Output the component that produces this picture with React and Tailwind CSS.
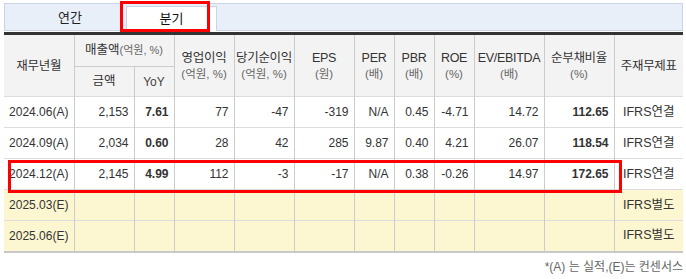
const rows = [
  { d: '2024.06(A)', s: '2,153', y: '7.61', op: '77', ni: '-47', eps: '-319', per: 'N/A', pbr: '0.45', roe: '-4.71', ev: '14.72', debt: '112.65', t: 'IFRS연결' },
  { d: '2024.09(A)', s: '2,034', y: '0.60', op: '28', ni: '42', eps: '285', per: '9.87', pbr: '0.40', roe: '4.21', ev: '26.07', debt: '118.54', t: 'IFRS연결' },
  { d: '2024.12(A)', s: '2,145', y: '4.99', op: '112', ni: '-3', eps: '-17', per: 'N/A', pbr: '0.38', roe: '-0.26', ev: '14.97', debt: '172.65', t: 'IFRS연결' },
  { d: '2025.03(E)', est: true, t: 'IFRS별도' },
  { d: '2025.06(E)', est: true, t: 'IFRS별도' },
];

const widths = [70, 60, 40, 60, 60, 60, 40, 40, 40, 70, 70, 69];

function Head({ title, unit, last }) {
  return (
    <th rowSpan={2} className={`${last ? '' : 'border-r border-[#cccccc]'} whitespace-nowrap font-normal text-[12.5px] leading-[16px] tracking-[-0.3px] text-[#333]`}>
      <div>{title}</div>
      {unit && <div className="text-[11.5px] tracking-normal text-[#666]">{unit}</div>}
    </th>
  );
}

export default function App() {
  const num = 'border-r border-[#cccccc] text-right pr-[5px]';
  return (
    <div className="relative h-[279px] w-[686px] bg-white pl-[4px] pr-[3px] pt-[3px] text-[#333]" style={{ fontFamily: '"Liberation Sans", "Noto Sans CJK KR", sans-serif' }}>
      <div className="flex h-[28px] items-end border border-[#c9d3e5] bg-[#e8eff9]">
        <div className="ml-[19px] flex h-[24px] w-[92px] items-center justify-center text-[13px] text-[#222]">연간</div>
        <div className="mb-[-1px] ml-[10px] flex h-[25px] w-[91px] items-center justify-center border-x border-t border-[#c9d3e5] bg-white text-[13px] text-[#111]">분기</div>
      </div>

      <table className="mt-[1px] w-[679px] table-fixed border-collapse border-t-[3px] border-b-2 border-t-[#333] border-b-[#c8c8c8] text-[12px]">
        <colgroup>
          {widths.map((w, i) => <col key={i} style={{ width: w }} />)}
        </colgroup>
        <thead className="bg-[#f3f3f3]">
          <tr className="h-[33px]">
            <Head title="재무년월" />
            <th colSpan={2} className="whitespace-nowrap border-r border-b border-[#cccccc] font-normal text-[12.5px] text-[#333]">
              매출액<span className="text-[11px] text-[#666]">(억원, %)</span>
            </th>
            <Head title="영업이익" unit="(억원, %)" />
            <Head title="당기순이익" unit="(억원, %)" />
            <Head title="EPS" unit="(원)" />
            <Head title="PER" unit="(배)" />
            <Head title="PBR" unit="(배)" />
            <Head title="ROE" unit="(%)" />
            <Head title="EV/EBITDA" unit="(배)" />
            <Head title="순부채비율" unit="(%)" />
            <Head title="주재무제표" last />
          </tr>
          <tr className="h-[30px]">
            <th className="border-r border-[#cccccc] font-normal text-[12.5px] text-[#333]">금액</th>
            <th className="border-r border-[#cccccc] font-normal text-[12px] text-[#444]">YoY</th>
          </tr>
        </thead>
        <tbody>
          {rows.map((r) => (
            <tr key={r.d} className={`h-[31px] border-t border-[#dddddd] ${r.est ? 'bg-[#fdf7d1]' : 'bg-white'}`}>
              <td className="border-r border-[#cccccc] text-center">{r.d}</td>
              <td className={num}>{r.s}</td>
              <td className={`${num} font-bold`}>{r.y}</td>
              <td className={num}>{r.op}</td>
              <td className={num}>{r.ni}</td>
              <td className={num}>{r.eps}</td>
              <td className={num}>{r.per}</td>
              <td className={num}>{r.pbr}</td>
              <td className={num}>{r.roe}</td>
              <td className={num}>{r.ev}</td>
              <td className={`${num} font-bold`}>{r.debt}</td>
              <td className="text-center text-[12.5px]">{r.t}</td>
            </tr>
          ))}
        </tbody>
      </table>

      <div className="mt-[5px] text-right text-[12px] text-[#666]">*(A) 는 실적,(E)는 컨센서스</div>

      <div className="pointer-events-none absolute left-[120px] top-[1px] h-[31px] w-[90px] border-[3px] border-[#ff0000]" />
      <div className="pointer-events-none absolute left-[8px] top-[160px] h-[33px] w-[614px] border-[3px] border-[#ff0000]" />
    </div>
  );
}
